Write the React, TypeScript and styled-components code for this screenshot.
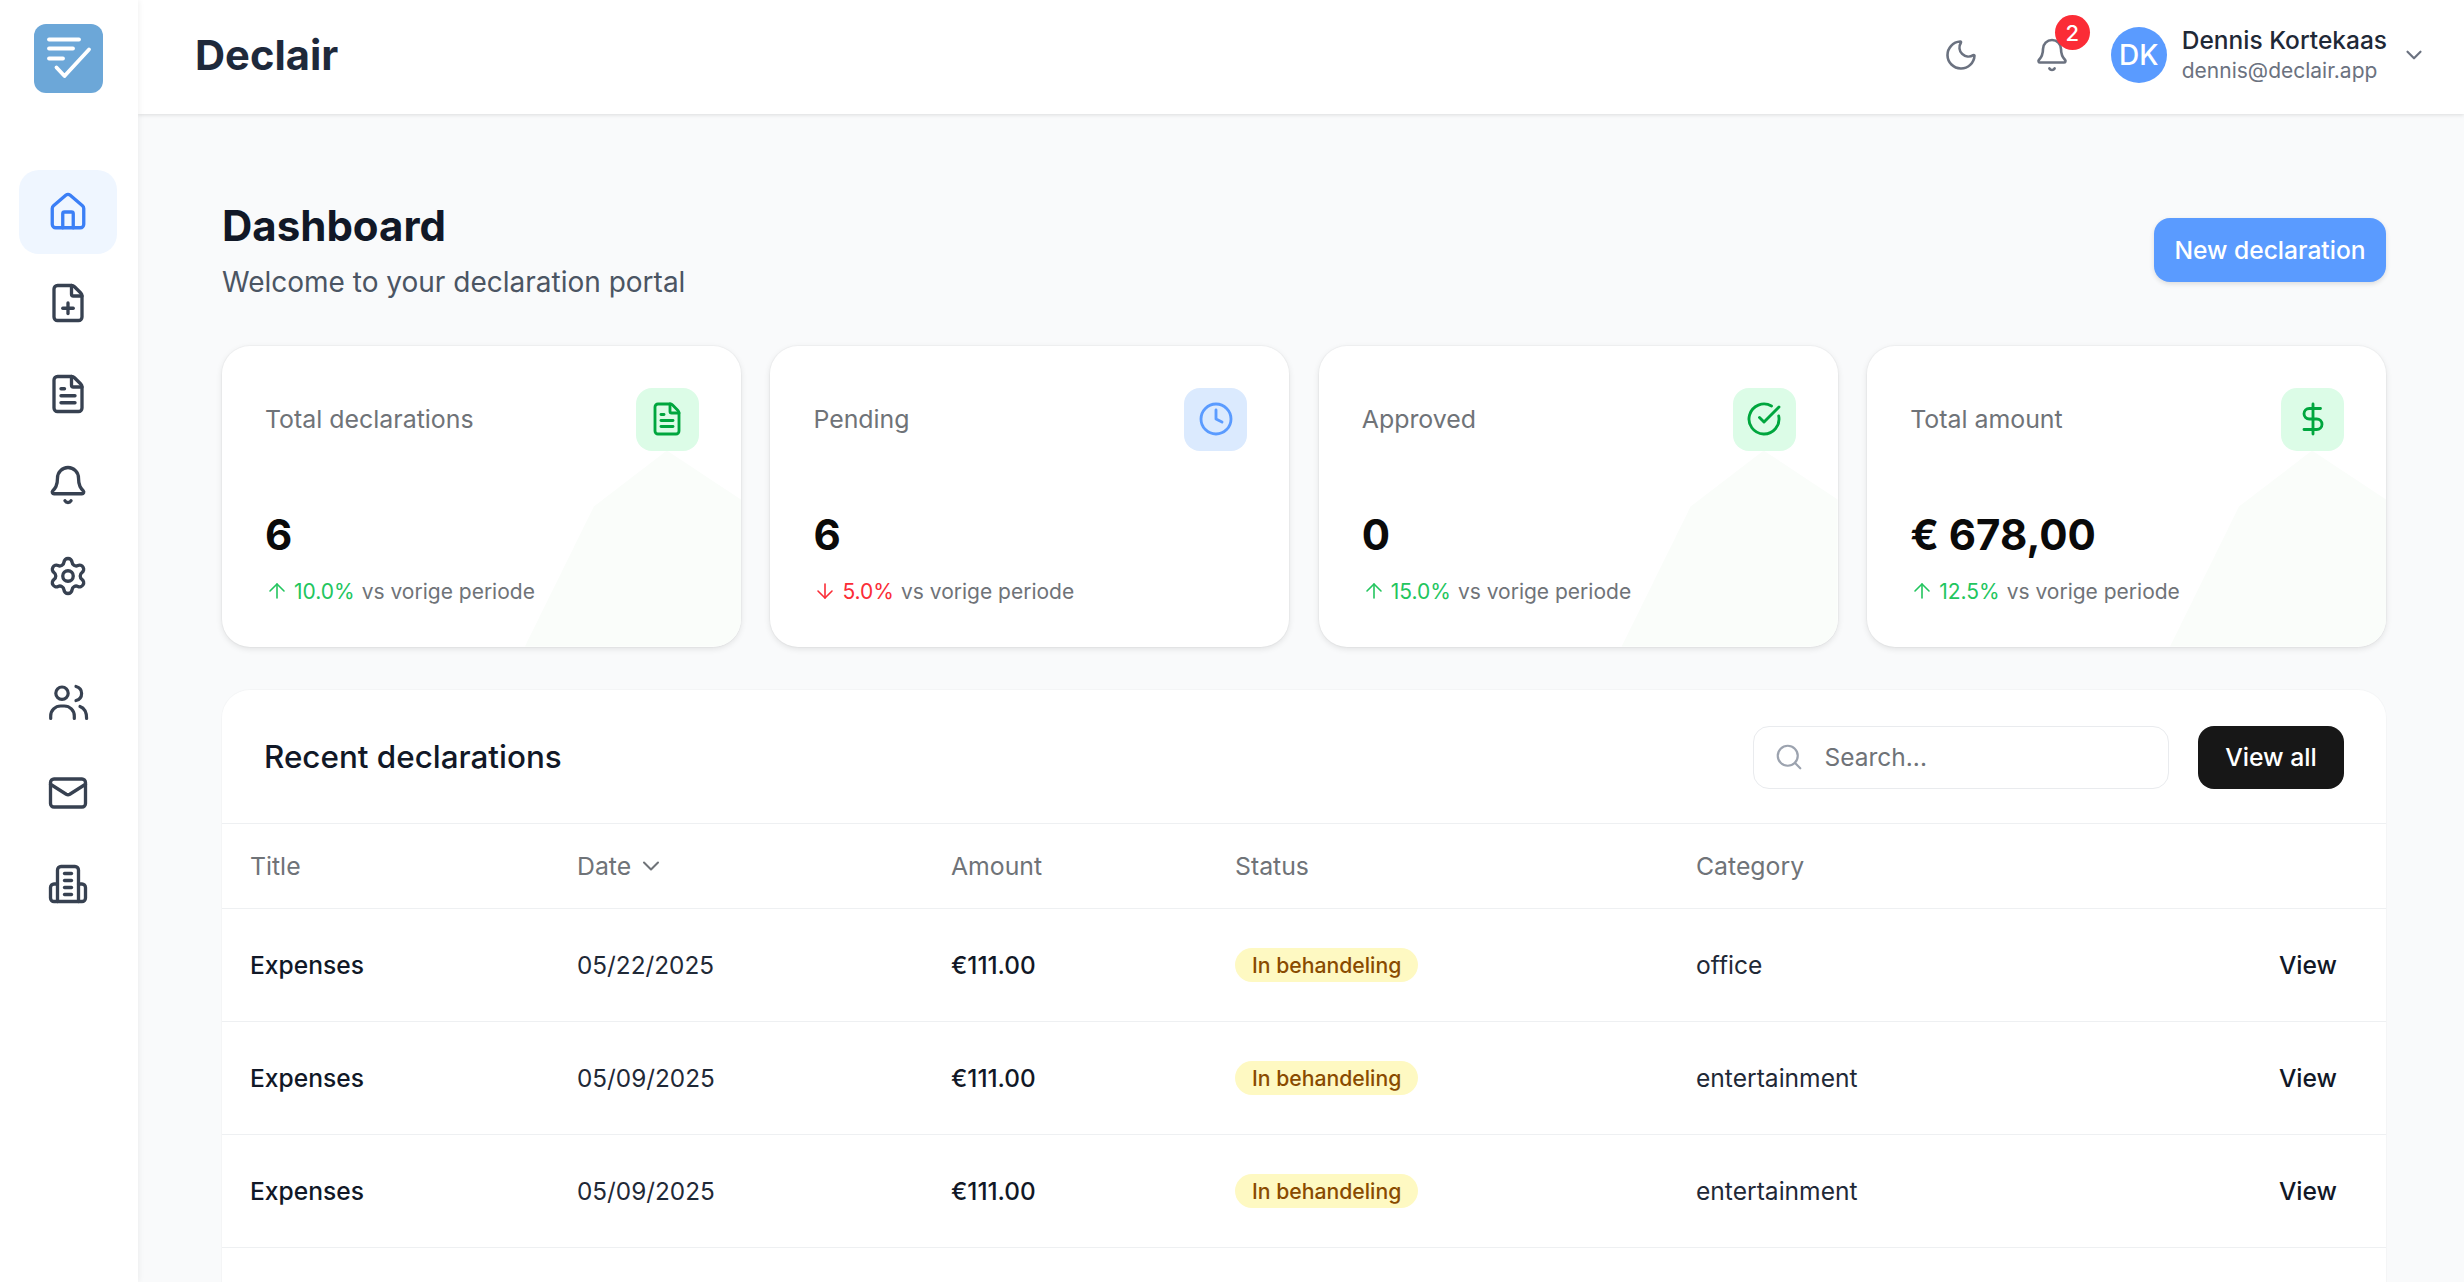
import React from "react";
import styled, { createGlobalStyle } from "styled-components";
import {
  ArrowDown,
  ArrowUp,
  Bell,
  ChevronDown,
  CircleCheckBig,
  Clock,
  DollarSign,
  FilePlus,
  FileText,
  House,
  Mail,
  Moon,
  Search,
  Settings,
} from "lucide-react";

const GlobalStyle = createGlobalStyle`
  html, body { margin: 0; padding: 0; height: 100%; overflow: hidden; background: #f9fafb; }
  body { font-family: Inter, "Liberation Sans", sans-serif; color: #111827; }
  * { box-sizing: border-box; }
`;

const Shell = styled.div`
  display: flex;
  width: 100%;
  height: 100vh;
  overflow: hidden;
`;

const Sidebar = styled.aside`
  flex: 0 0 138px;
  display: flex;
  flex-direction: column;
  align-items: center;
  padding: 24px 2px 0 0;
  background: #fff;
  box-shadow: 1px 0 6px rgba(0, 0, 0, 0.06);
  z-index: 2;
`;

const Logo = styled.div`
  width: 69px;
  height: 69px;
  margin-bottom: 77px;
  border-radius: 12px;
  background: #6ca7d8;
  svg { display: block; }
`;

const NavGroup = styled.nav`
  display: flex;
  flex-direction: column;
  gap: 7px;
  & + & { margin-top: 42px; }
`;

const NavItem = styled.a<{ $active?: boolean }>`
  width: 98px;
  height: 84px;
  display: flex;
  align-items: center;
  justify-content: center;
  border-radius: 20px;
  color: ${(p) => (p.$active ? "#3b7ff6" : "#374151")};
  background: ${(p) => (p.$active ? "#eff6ff" : "transparent")};
`;

const Column = styled.div`
  flex: 1;
  min-width: 0;
  display: flex;
  flex-direction: column;
`;

const TopBar = styled.header`
  flex: 0 0 114px;
  display: flex;
  align-items: center;
  padding: 0 37px 4px 57px;
  background: #fff;
  box-shadow: 0 1px 4px rgba(0, 0, 0, 0.12);
  z-index: 1;
`;

const Brand = styled.div`
  flex: 1;
  font-size: 41.7px;
  line-height: 53px;
  font-weight: 700;
  color: #1e293b;
`;

const TopIcon = styled.span`
  position: relative;
  display: flex;
  width: 36px;
  height: 36px;
  color: #6b7280;
`;

const MoonSlot = styled(TopIcon)`
  margin-right: 54.5px;
`;

const BellSlot = styled(TopIcon)`
  margin-right: 41px;
`;

const CountBadge = styled.span`
  position: absolute;
  left: 21px;
  top: -22px;
  width: 35px;
  height: 35px;
  display: flex;
  align-items: center;
  justify-content: center;
  border-radius: 50%;
  background: #fb2c36;
  color: #fff;
  font-size: 22px;
  font-weight: 500;
`;

const Avatar = styled.div`
  width: 56px;
  height: 56px;
  display: flex;
  align-items: center;
  justify-content: center;
  border-radius: 50%;
  background: #5a9bff;
  color: #fff;
  font-size: 28px;
  font-weight: 500;
`;

const UserText = styled.div`
  display: flex;
  flex-direction: column;
  margin: 0 14px 0 15px;
`;

const UserName = styled.span`
  font-size: 24.5px;
  line-height: 32px;
  font-weight: 500;
  color: #1f2937;
`;

const UserMail = styled.span`
  font-size: 21px;
  line-height: 30px;
  color: #6b7280;
`;

const UserCaret = styled(ChevronDown)`
  color: #6b7280;
`;

const Content = styled.main`
  flex: 1;
  min-height: 0;
  overflow: hidden;
  padding: 85px 78px 0 84px;
  background: #f9fafb;
`;

const PageHead = styled.div`
  display: flex;
  align-items: center;
  justify-content: space-between;
  margin-bottom: 44.5px;
`;

const PageTitle = styled.h1`
  margin: 0 0 11px;
  font-size: 42px;
  line-height: 53px;
  font-weight: 700;
  color: #111827;
`;

const PageSub = styled.p`
  margin: 0;
  font-size: 28px;
  line-height: 38px;
  color: #4b5563;
`;

const PrimaryButton = styled.button`
  width: 232px;
  height: 64px;
  border: 0;
  border-radius: 16px;
  background: #5a9bff;
  color: #fff;
  font: 500 24.6px Inter, sans-serif;
  box-shadow: 0 2px 5px rgba(0, 0, 0, 0.12);
`;

const CardGrid = styled.section`
  display: grid;
  grid-template-columns: repeat(4, 1fr);
  gap: 29.5px;
  margin-bottom: 43px;
`;

const Card = styled.article`
  position: relative;
  height: 301px;
  overflow: hidden;
  padding: 42px 42px 0 43px;
  border-radius: 28px;
  background: #fff;
  box-shadow: 0 2px 6px rgba(0, 0, 0, 0.1), 0 0 0 1px rgba(0, 0, 0, 0.025);
`;

const CardGlow = styled.div`
  position: absolute;
  right: 0;
  bottom: 0;
  width: 216px;
  height: 196px;
  background: #fafdfa;
  clip-path: polygon(142px 0, 69px 56px, 0 196px, 216px 196px, 216px 49px);
`;

const CardHead = styled.div`
  position: relative;
  display: flex;
  align-items: center;
  justify-content: space-between;
  margin-bottom: 57px;
`;

const CardLabel = styled.span`
  font-size: 24.9px;
  line-height: 33px;
  padding-top: 1.5px;
  color: #6f7378;
  font-weight: 400;
`;

const CardIcon = styled.span<{ $tone: "green" | "blue" }>`
  width: 63px;
  height: 63px;
  display: flex;
  align-items: center;
  justify-content: center;
  border-radius: 16px;
  background: ${(p) => (p.$tone === "green" ? "#dcfce7" : "#dbeafe")};
  color: ${(p) => (p.$tone === "green" ? "#00a63e" : "#5a9bff")};
`;

const CardValue = styled.div`
  position: relative;
  margin-bottom: 14px;
  font-size: 42px;
  line-height: 53px;
  font-weight: 700;
  color: #0a0a0a;
`;

const Trend = styled.div`
  position: relative;
  display: flex;
  align-items: center;
  height: 33px;
  font-size: 21px;
  color: #6f7378;
`;

const TrendValue = styled.span<{ $up: boolean }>`
  display: flex;
  align-items: center;
  gap: 5px;
  margin-right: 7px;
  color: ${(p) => (p.$up ? "#22c55e" : "#fb2c36")};
`;

const TablePanel = styled.section`
  min-height: 640px;
  border-radius: 28px;
  background: #fff;
  box-shadow: 0 0 0 1px rgba(0, 0, 0, 0.02);
`;

const PanelHead = styled.div`
  height: 134px;
  display: flex;
  align-items: center;
  padding: 2px 42px 0;
  border-bottom: 1.5px solid #eef0f2;
`;

const PanelTitle = styled.h2`
  flex: 1;
  margin: 0;
  font-size: 31.4px;
  font-weight: 500;
  color: #111827;
`;

const SearchBox = styled.label`
  width: 416px;
  height: 63px;
  display: flex;
  align-items: center;
  gap: 20.5px;
  margin-right: 29px;
  padding: 0 20px;
  border: 1.5px solid #e9ebee;
  border-radius: 16px;
  color: #9ca3af;
`;

const SearchInput = styled.input`
  flex: 1;
  min-width: 0;
  border: 0;
  outline: 0;
  padding: 0;
  background: transparent;
  font: 400 24.5px Inter, sans-serif;
  &::placeholder { color: #6f7378; opacity: 1; }
`;

const DarkButton = styled.button`
  width: 146px;
  height: 63px;
  border: 0;
  border-radius: 16px;
  background: #171717;
  color: #fff;
  font: 500 24.8px Inter, sans-serif;
`;

const Row = styled.div<{ $head?: boolean }>`
  display: grid;
  grid-template-columns: 327px 374px 284px 461px 1fr auto;
  align-items: center;
  height: ${(p) => (p.$head ? "85px" : "113px")};
  padding-left: 28px;
  border-bottom: 1.5px solid #eef0f2;
`;

const HeadCell = styled.div`
  display: flex;
  align-items: center;
  gap: 6px;
  font-size: 24.8px;
  font-weight: 400;
  color: #6f7378;
`;

const Cell = styled.div<{ $strong?: boolean }>`
  font-size: 24.6px;
  font-weight: ${(p) => (p.$strong ? 500 : 400)};
  color: ${(p) => (p.$strong ? "#111827" : "#1f2937")};
`;

const Figure = styled(Cell)`
  font-size: 24.3px;
`;

const StatusPill = styled.span`
  display: inline-block;
  padding: 0 17px;
  border-radius: 999px;
  background: #fef9c2;
  color: #894b00;
  font-size: 21.2px;
  line-height: 34px;
  font-weight: 500;
`;

const ViewLink = styled.a`
  margin-right: 49px;
  font-size: 24.6px;
  font-weight: 500;
  color: #111827;
`;

const UsersGlyph = () => (
  <svg width="42" height="42" viewBox="0 0 42 42" fill="none" stroke="currentColor" strokeWidth="3.2" strokeLinecap="round" strokeLinejoin="round">
    <circle cx="15" cy="12.2" r="6.2" />
    <path d="M3.7 37.5v-2.5a10 10 0 0 1 10-10h3.6a10 10 0 0 1 10 10v2.5" />
    <path d="M29 5.5c4 1 5.6 4 5.6 7s-1.6 6-5.6 7" />
    <path d="M33 25.5c4.2 1.5 6.6 5.4 6.6 12" />
  </svg>
);

const BuildingGlyph = () => (
  <svg width="42" height="42" viewBox="0 0 24 24" fill="none" stroke="currentColor" strokeWidth="1.9" strokeLinecap="round" strokeLinejoin="round">
    <path d="M6 22V4a2 2 0 0 1 2-2h8a2 2 0 0 1 2 2v18Z" />
    <path d="M6 12H4a2 2 0 0 0-2 2v6a2 2 0 0 0 2 2h2" />
    <path d="M18 12h2a2 2 0 0 1 2 2v6a2 2 0 0 1-2 2h-2" />
    <path d="M10 6h4" />
    <path d="M10 10h4" />
    <path d="M10 14h4" />
    <path d="M10 18h4" />
  </svg>
);

const LogoMark = () => (
  <svg width="69" height="69" viewBox="0 0 69 69" fill="none" stroke="#fff" strokeWidth="3.8" strokeLinecap="round" strokeLinejoin="round">
    <path d="M15 15.5h30" />
    <path d="M15 24.5h24" />
    <path d="M15 34.5h14" />
    <path d="M22.5 43.5l8 8.5L55 25.5" />
  </svg>
);

const navIcon = { size: 42, strokeWidth: 1.9 };
const cardIcon = { size: 36, strokeWidth: 1.9 };
const trendIcon = { size: 24, strokeWidth: 1.6 };

const stats = [
  { label: "Total declarations", value: "6", tone: "green", Icon: FileText, up: true, change: "10.0%", glow: true },
  { label: "Pending", value: "6", tone: "blue", Icon: Clock, up: false, change: "5.0%", glow: false },
  { label: "Approved", value: "0", tone: "green", Icon: CircleCheckBig, up: true, change: "15.0%", glow: true },
  { label: "Total amount", value: "€ 678,00", tone: "green", Icon: DollarSign, up: true, change: "12.5%", glow: true },
] as const;

const rows = [
  { date: "05/22/2025", category: "office" },
  { date: "05/09/2025", category: "entertainment" },
  { date: "05/09/2025", category: "entertainment" },
];

export default function App() {
  return (
    <Shell>
      <GlobalStyle />
      <Sidebar>
        <Logo>
          <LogoMark />
        </Logo>
        <NavGroup>
          <NavItem $active><House {...navIcon} /></NavItem>
          <NavItem><FilePlus {...navIcon} /></NavItem>
          <NavItem><FileText {...navIcon} /></NavItem>
          <NavItem><Bell {...navIcon} /></NavItem>
          <NavItem><Settings {...navIcon} /></NavItem>
        </NavGroup>
        <NavGroup>
          <NavItem><UsersGlyph /></NavItem>
          <NavItem><Mail {...navIcon} /></NavItem>
          <NavItem><BuildingGlyph /></NavItem>
        </NavGroup>
      </Sidebar>
      <Column>
        <TopBar>
          <Brand>Declair</Brand>
          <MoonSlot><Moon size={36} strokeWidth={1.75} /></MoonSlot>
          <BellSlot>
            <Bell size={36} strokeWidth={1.75} />
            <CountBadge>2</CountBadge>
          </BellSlot>
          <Avatar>DK</Avatar>
          <UserText>
            <UserName>Dennis Kortekaas</UserName>
            <UserMail>dennis@declair.app</UserMail>
          </UserText>
          <UserCaret size={26} strokeWidth={2} />
        </TopBar>
        <Content>
          <PageHead>
            <div>
              <PageTitle>Dashboard</PageTitle>
              <PageSub>Welcome to your declaration portal</PageSub>
            </div>
            <PrimaryButton>New declaration</PrimaryButton>
          </PageHead>
          <CardGrid>
            {stats.map(({ label, value, tone, Icon, up, change, glow }) => (
              <Card key={label}>
                {glow && <CardGlow />}
                <CardHead>
                  <CardLabel>{label}</CardLabel>
                  <CardIcon $tone={tone}><Icon {...cardIcon} /></CardIcon>
                </CardHead>
                <CardValue>{value}</CardValue>
                <Trend>
                  <TrendValue $up={up}>
                    {up ? <ArrowUp {...trendIcon} /> : <ArrowDown {...trendIcon} />}
                    {change}
                  </TrendValue>
                  vs vorige periode
                </Trend>
              </Card>
            ))}
          </CardGrid>
          <TablePanel>
            <PanelHead>
              <PanelTitle>Recent declarations</PanelTitle>
              <SearchBox>
                <Search size={30} strokeWidth={1.75} />
                <SearchInput placeholder="Search..." />
              </SearchBox>
              <DarkButton>View all</DarkButton>
            </PanelHead>
            <Row $head>
              <HeadCell>Title</HeadCell>
              <HeadCell>Date <ChevronDown size={28} strokeWidth={1.75} /></HeadCell>
              <HeadCell>Amount</HeadCell>
              <HeadCell>Status</HeadCell>
              <HeadCell>Category</HeadCell>
            </Row>
            {rows.map((r, i) => (
              <Row key={i}>
                <Cell $strong>Expenses</Cell>
                <Figure>{r.date}</Figure>
                <Figure $strong>€111.00</Figure>
                <Cell><StatusPill>In behandeling</StatusPill></Cell>
                <Cell>{r.category}</Cell>
                <ViewLink>View</ViewLink>
              </Row>
            ))}
          </TablePanel>
        </Content>
      </Column>
    </Shell>
  );
}
